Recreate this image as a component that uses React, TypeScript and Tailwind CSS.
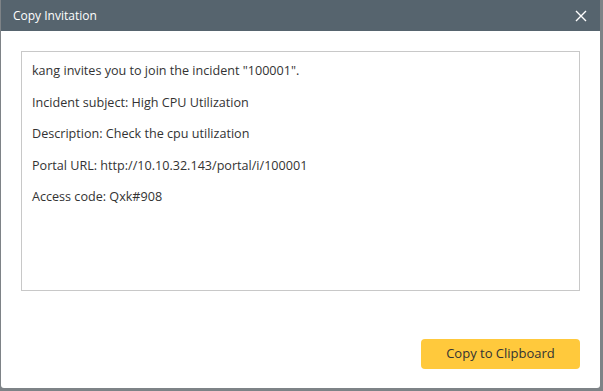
import React from 'react';

const lines = [
  'kang invites you to join the incident "100001".',
  'Incident subject: High CPU Utilization',
  'Description: Check the cpu utilization',
  'Portal URL: http://10.10.32.143/portal/i/100001',
  'Access code: Qxk#908',
];

export default function App() {
  return (
    <div className="w-[603px] h-[391px] bg-[#7e8387] overflow-hidden" style={{ fontFamily: '"Open Sans", "Noto Sans", sans-serif' }}>
      {/* Dialog */}
      <div className="ml-px w-[599px] h-[388px] bg-white rounded-b-[3px] flex flex-col">
        <div className="h-[31px] bg-[#56646e] flex items-center justify-between pl-3 pr-3">
          <span className="text-[12px] text-white">Copy Invitation</span>
          <svg width="12" height="12" viewBox="0 0 12 12" className="mr-[1px]">
            <path d="M1 1 L11 11 M11 1 L1 11" stroke="#fff" strokeWidth="1.4" />
          </svg>
        </div>

        <div className="px-5 pt-5">
          <div className="h-[240px] border border-[#c8c8c8] px-[10px] pt-[10px] flex flex-col text-[12.6px] text-[#333]">
            {lines.map(l => (
              <div key={l} className="h-[31.5px] leading-[18px]">{l}</div>
            ))}
          </div>
        </div>

        <div className="flex justify-end px-5 mt-[48px]">
          <button className="w-[159px] h-[30px] rounded-[4px] bg-[#ffc93c] text-[13px] text-[#333]">
            Copy to Clipboard
          </button>
        </div>
      </div>
    </div>
  );
}
